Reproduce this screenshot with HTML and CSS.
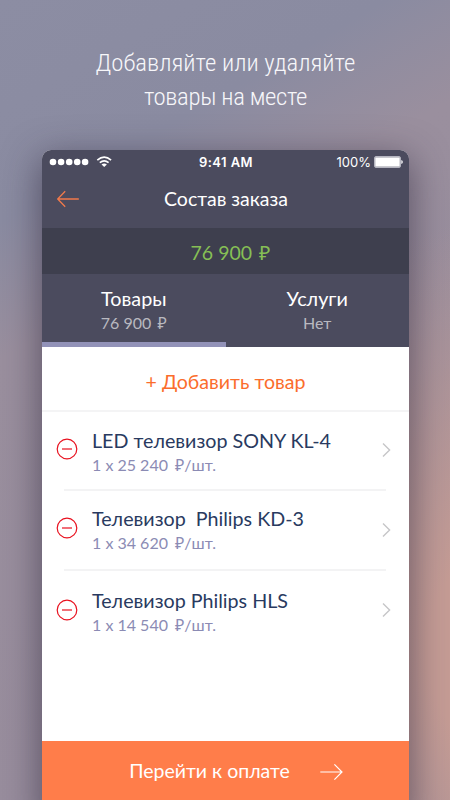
FILE: index.html
```html
<!DOCTYPE html>
<html lang="ru">
<head>
<meta charset="utf-8">
<title>Состав заказа</title>
<link rel="stylesheet" href="styles.css">
</head>
<body>
<main class="page">
  <h1 class="headline"><span class="headline-line">Добавляйте или удаляйте</span><span class="headline-line tight">товары на месте</span></h1>
  <section class="phone">
    <div class="status">
      <svg class="signal" width="64" height="14" viewBox="0 0 64 14" fill="#fff">
        <circle cx="4" cy="7" r="3.3"/><circle cx="12.1" cy="7" r="3.3"/><circle cx="20.2" cy="7" r="3.3"/><circle cx="28.2" cy="7" r="3.3"/><circle cx="36.1" cy="7" r="3.3"/>
        <g fill="none" stroke="#fff" stroke-width="1.6"><path d="M48.3 5.2Q55.2 -.8 62.1 5.2"/><path d="M50.8 7.7Q55.2 4 59.6 7.7"/></g>
        <path d="M52.5 9.4Q55.2 7.4 57.9 9.4L55.2 12z"/>
      </svg>
      <span class="time">9:41 AM</span>
      <span class="battery"><span class="percent">100%</span>
        <svg width="29" height="12" viewBox="0 0 29 12"><rect x=".5" y=".5" width="26" height="11" rx="1.5" fill="none" stroke="#b5b5c0"/><rect x="1.2" y="1.3" width="24.6" height="9.4" fill="#fff"/><path d="M27.3 4q1.5.5 1.5 2t-1.5 2z" fill="#fff"/></svg>
      </span>
    </div>
    <header class="nav">
      <svg width="23" height="18" viewBox="0 0 23 18" fill="none" stroke="#f27a4b" stroke-width="1.3"><path d="M22.8 9H1.7M9.2 1.3L1.7 9l7.5 7.7"/></svg>
      <h2 class="nav-title">Состав заказа</h2>
    </header>
    <div class="total">76 900 <span class="rub">₽</span></div>
    <div class="tabs">
      <div class="tab active"><span class="tab-name">Товары</span><span class="tab-value">76 900 <span class="rub">₽</span></span></div>
      <div class="tab"><span class="tab-name">Услуги</span><span class="tab-value">Нет</span></div>
    </div>
    <div class="content">
      <div class="add">+ Добавить товар</div>
      <div class="items">
        <div class="item">
          <svg class="minus" width="22" height="22" viewBox="0 0 22 22" fill="none" stroke="#e8101e" stroke-width="1.2"><circle cx="11" cy="11" r="9.8"/><path d="M6 11h10"/></svg>
          <div class="item-text"><div class="name">LED телевизор SONY KL-4</div><div class="price">1 x 25 240 <span class="rub">₽</span>/шт.</div></div>
          <svg class="chevron" width="9" height="16" viewBox="0 0 9 16" fill="none" stroke="#c6c6c8" stroke-width="1.4"><path d="M1 1.5L7.6 8 1 14.5"/></svg>
        </div>
        <div class="item second">
          <svg class="minus" width="22" height="22" viewBox="0 0 22 22" fill="none" stroke="#e8101e" stroke-width="1.2"><circle cx="11" cy="11" r="9.8"/><path d="M6 11h10"/></svg>
          <div class="item-text"><div class="name">Телевизор&nbsp; Philips KD-3</div><div class="price">1 x 34 620 <span class="rub">₽</span>/шт.</div></div>
          <svg class="chevron" width="9" height="16" viewBox="0 0 9 16" fill="none" stroke="#c6c6c8" stroke-width="1.4"><path d="M1 1.5L7.6 8 1 14.5"/></svg>
        </div>
        <div class="item third">
          <svg class="minus" width="22" height="22" viewBox="0 0 22 22" fill="none" stroke="#e8101e" stroke-width="1.2"><circle cx="11" cy="11" r="9.8"/><path d="M6 11h10"/></svg>
          <div class="item-text"><div class="name">Телевизор Philips HLS</div><div class="price">1 x 14 540 <span class="rub">₽</span>/шт.</div></div>
          <svg class="chevron" width="9" height="16" viewBox="0 0 9 16" fill="none" stroke="#c6c6c8" stroke-width="1.4"><path d="M1 1.5L7.6 8 1 14.5"/></svg>
        </div>
      </div>
    </div>
    <footer class="pay"><span>Перейти к оплате</span>
      <svg width="23" height="18" viewBox="0 0 23 18" fill="none" stroke="#fff" stroke-width="1.2"><path d="M.3 9H22M14.4 1.3L22 9l-7.6 7.7"/></svg>
    </footer>
  </section>
</main>
</body>
</html>
```
FILE: styles.css
```css
* { box-sizing: border-box; }
body { margin: 0; font-family: Lato, "Noto Sans", sans-serif; }
svg { display: block; flex: none; }
.page {
  width: 450px; height: 800px; overflow: hidden; padding: 46px 41px 0 42px;
  background:
    radial-gradient(ellipse 280px 430px at 490px 650px, #c59c95 22%, rgba(197,156,149,0)),
    linear-gradient(150deg, #8c8da3 0, #8a8ba1 21%, #9a8f9e 34%, #988d9d 78%, #948b9c 100%);
}
.headline {
  margin: 0; height: 104px; display: flex; flex-direction: column; align-items: center;
  font: 300 24.8px/34px Roboto, sans-serif; color: #f7f7fa; white-space: nowrap;
}
.headline-line { font-stretch: 75%; }
.tight { letter-spacing: -.35px; }
.phone {
  height: 670px; display: flex; flex-direction: column; overflow: hidden;
  border-radius: 9px 9px 0 0; background: #fff; box-shadow: 0 10px 36px 2px rgba(45,38,58,.58);
}
.status {
  height: 24px; flex: none; display: grid; grid-template-columns: 1fr auto 1fr; align-items: center;
  padding: 0 6px 0 7px; background: #4b4b5e; color: #fff; font: 600 13px/24px Inter, sans-serif;
}
.time { letter-spacing: .45px; }
.battery { display: flex; justify-content: flex-end; align-items: center; gap: 3px; font-weight: 400; }
.nav { height: 54px; flex: none; display: flex; align-items: center; padding: 0 14px 4px; background: #4b4b5e; }
.nav-title { flex: 1; margin: 0 22px 0 0; text-align: center; font-size: 19.5px; font-weight: 400; line-height: 26px; color: #fff; }
.total { height: 46px; flex: none; background: #3e3f4e; color: #86bf55; font-size: 19.5px; line-height: 50px; text-align: center; padding-left: 10px; }
.rub { margin-left: 2px; }
.price .rub { margin-left: 3px; }
.tabs { height: 73px; flex: none; display: flex; background: #4b4b5e; }
.tab { flex: 1; display: flex; flex-direction: column; align-items: center; padding-top: 12px; border-bottom: 5px solid transparent; }
.active { border-color: #9292b8; }
.tab-name { color: #fff; font-size: 19.8px; line-height: 26px; margin-top: -1px; }
.tab-value { color: #b9b9c0; font-size: 16px; line-height: 22px; margin-top: 1px; }
.content { flex: none; height: 394px; }
.add { height: 65px; border-bottom: 2px solid #f4f4f5; text-align: center; font-size: 19.6px; line-height: 69px; color: #fb6d2c; }
.item { height: 79px; display: flex; align-items: flex-start; padding: 16px 18px 0 14px; background: linear-gradient(#f3f3f4,#f3f3f4) 22px 100% / 322px 2px no-repeat; }
.item.second, .item.third { height: 80px; }
.item.second { padding-top: 15px; }
.item.third { background: none; padding-top: 17px; }
.minus { margin-top: 10px; }
.second .minus, .third .minus { margin-top: 11px; }
.item-text { flex: 1; padding-left: 14px; white-space: nowrap; }
.name { font-size: 19.7px; line-height: 26px; color: #293a60; }
.price { font-size: 16px; line-height: 22px; color: #8b8bb4; }
.chevron { margin-top: 14px; }
.second .chevron { margin-top: 16px; }
.third .chevron { margin-top: 14px; }
.pay { height: 59px; flex: none; display: flex; align-items: center; justify-content: center; gap: 30px; padding: 3px 0 0 21px; background: #ff7d4a; color: #fff; font-size: 19.5px; line-height: 28px; }
.pay span { margin-top: -3px; }
```
